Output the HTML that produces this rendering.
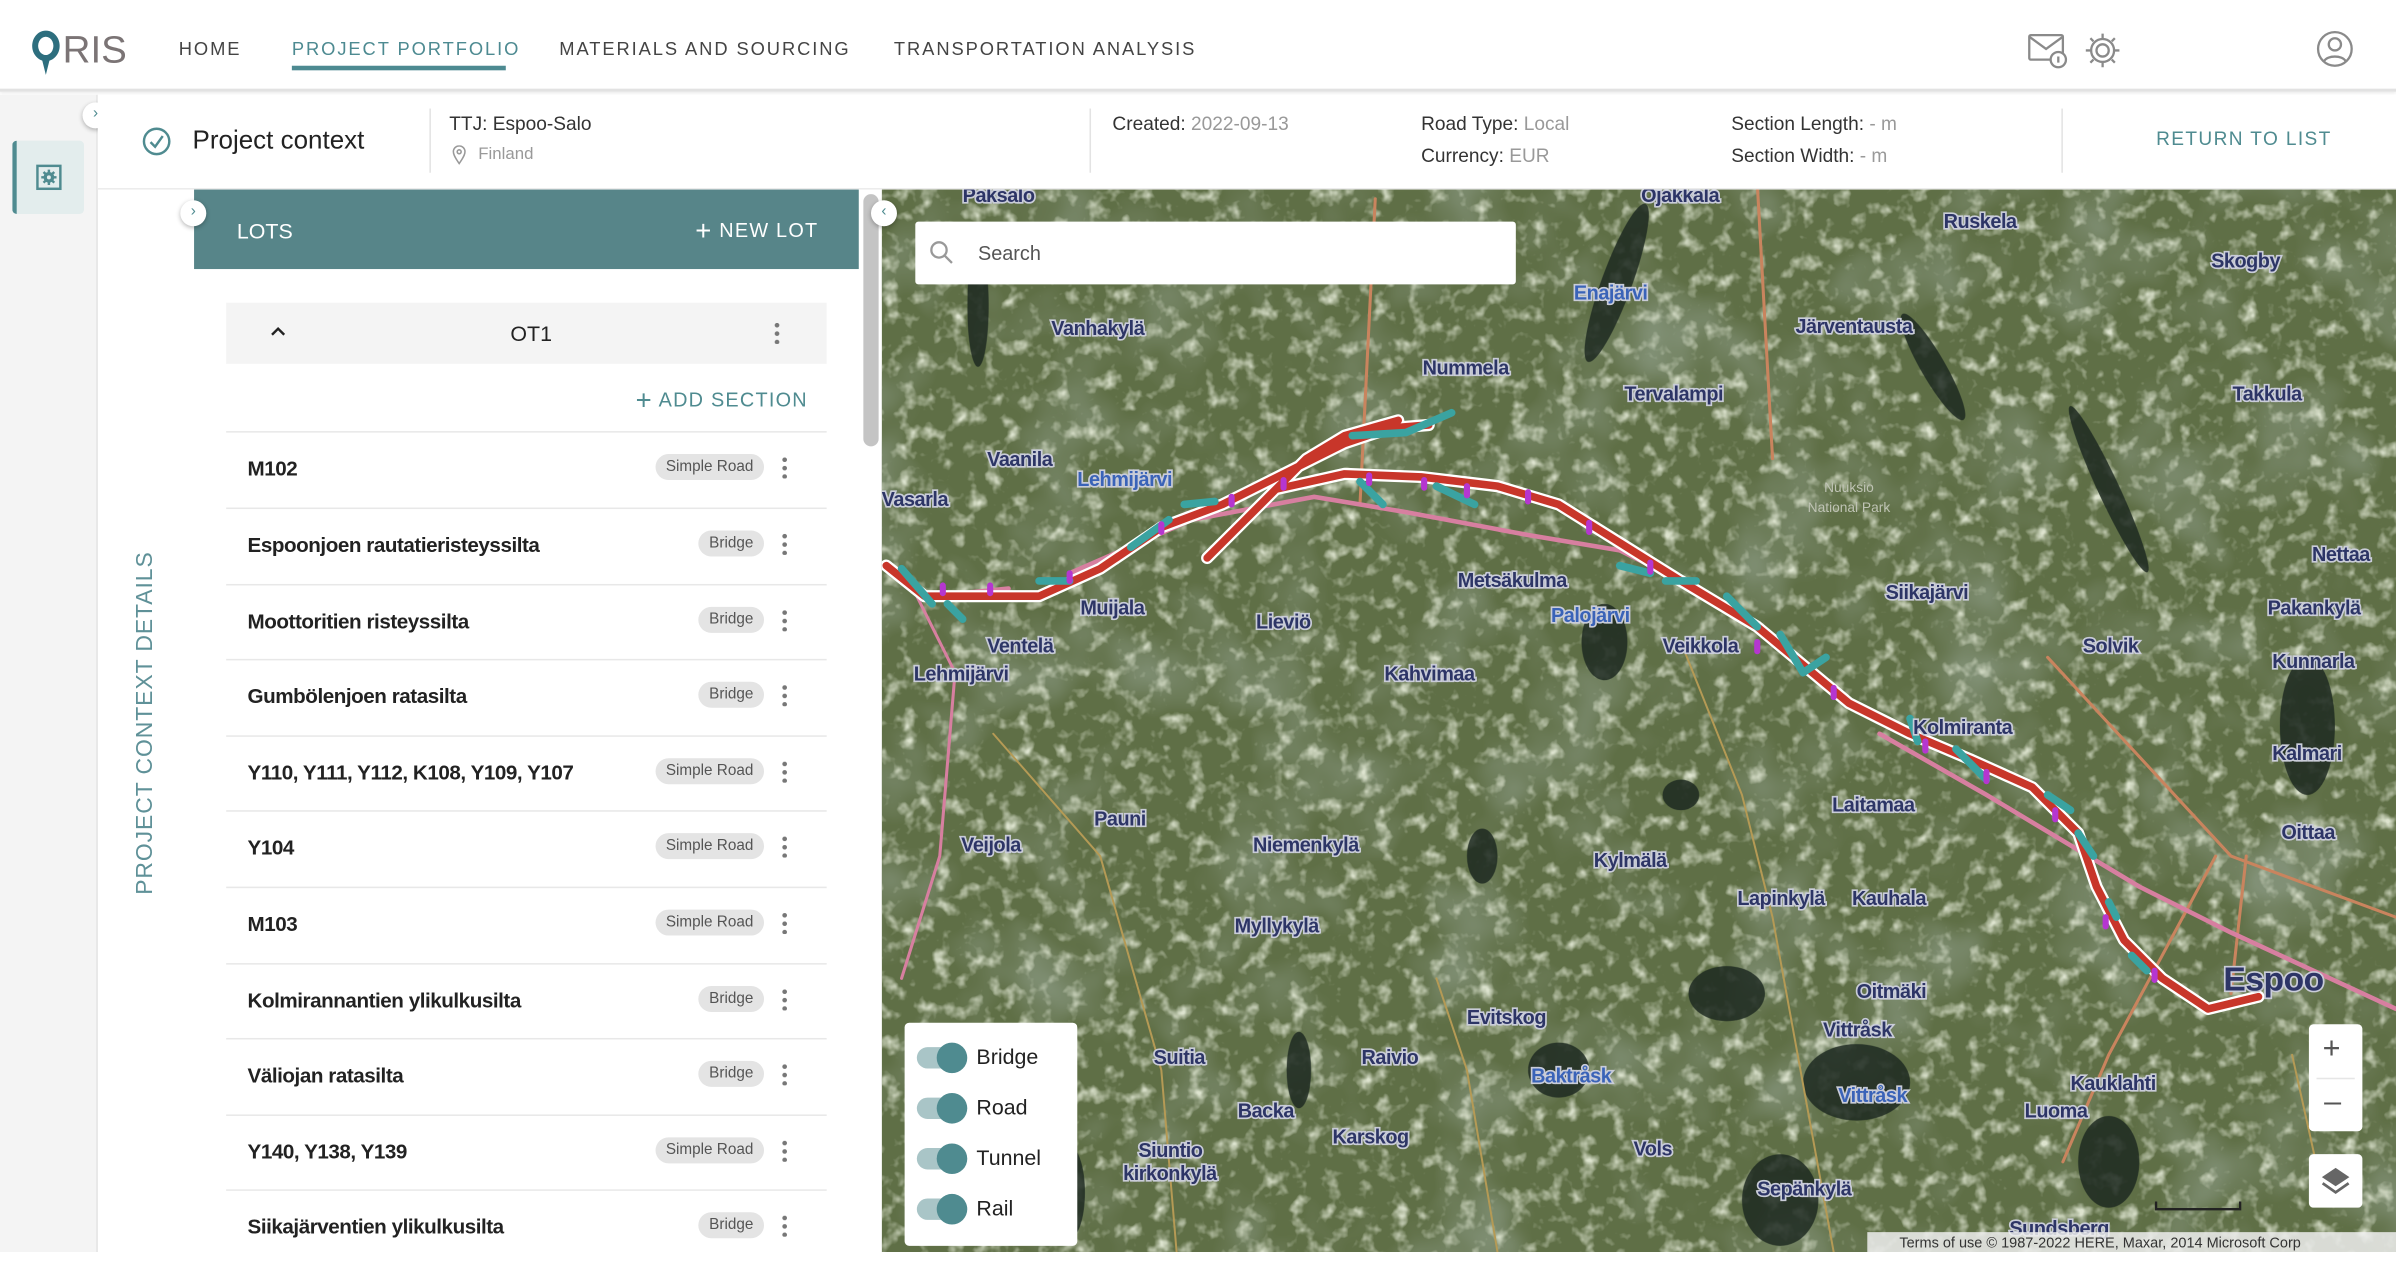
<!DOCTYPE html>
<html><head><meta charset="utf-8">
<style>
*{box-sizing:border-box;margin:0;padding:0}
html,body{width:2396px;height:1252px;overflow:hidden;background:#fff}
#s{position:absolute;left:0;top:0;width:1568px;height:819px;transform:scale(1.52806,1.52869);transform-origin:0 0;font-family:"Liberation Sans",sans-serif;color:#222}
.a{position:absolute}
.nav{font-size:12px;letter-spacing:1.25px;color:#444;top:25px}
.row{position:absolute;left:148px;width:393px;height:50px;border-top:1px solid #e8e8e8}
.row .t{position:absolute;left:14px;top:16px;font-size:13.5px;font-weight:bold;color:#222;letter-spacing:-.3px}
.chip{position:absolute;top:14px;right:41px;height:17px;padding:0 7px;border-radius:9px;background:#e4e4e4;font-size:10px;color:#555;line-height:17px}
.keb{position:absolute;right:26px;top:15px;width:3px;height:15px;background:radial-gradient(circle,#777 1.4px,transparent 1.6px) 0 0/3px 5.5px}
.circ{position:absolute;width:17px;height:17px;border-radius:50%;background:#fff;box-shadow:0 1px 3px rgba(0,0,0,.3);font-size:10px;color:#4f8b90;text-align:center;line-height:16px}
.lab{font-family:"Liberation Sans",sans-serif;font-size:13px;fill:#2d3566;stroke:#c9ccd8;stroke-width:2.2px;paint-order:stroke;font-weight:bold;letter-spacing:-.3px}
.lb{fill:#3a63b8}
.tg{position:absolute;left:8px;width:32px;height:14px;border-radius:7px;background:#a9c5c7}
.tg:after{content:"";position:absolute;right:-1px;top:-3px;width:20px;height:20px;border-radius:50%;background:#4f8b90}
.tl{position:absolute;left:47px;font-size:14px;color:#222}
</style></head><body><div id="s">

<div class="a" style="left:0;top:0;width:1568px;height:60px;background:#fff;border-bottom:2px solid #e2e2e2;box-shadow:0 1px 2px rgba(0,0,0,.08)"></div>
<svg class="a" style="left:20px;top:17px" width="66" height="34" viewBox="0 0 66 34">
<path d="M10 3a9 10 0 1 0 .1 0zm0 4a5 6 0 1 1-.1 0z" fill="#2d6e7e" fill-rule="evenodd"/>
<path d="M7 20l3 12 3-12z" fill="#2d6e7e"/>
<text x="21" y="24" font-family="Liberation Sans" font-size="25" fill="#7b7475" textLength="42" lengthAdjust="spacingAndGlyphs">RIS</text>
</svg>
<div class="a nav" style="left:117px">HOME</div>
<div class="a nav" style="left:191px;color:#4d8a91">PROJECT PORTFOLIO</div>
<div class="a" style="left:191px;top:43px;width:140px;height:3px;background:#4d8a91"></div>
<div class="a nav" style="left:366px">MATERIALS AND SOURCING</div>
<div class="a nav" style="left:585px">TRANSPORTATION ANALYSIS</div>
<svg class="a" style="left:1326px;top:20px" width="64" height="26" viewBox="0 0 64 26" fill="none" stroke="#8a8a8a" stroke-width="1.5">
<rect x="2" y="3" width="22" height="16" rx="1"/><path d="M2 4l11 8 11-8"/><circle cx="21" cy="19" r="5" fill="#fff"/><path d="M21 17v4"/>
<circle cx="50" cy="13" r="4"/><path d="M50 2v3M50 21v3M39 13h3M58 13h3M42 5l2 2M56 19l2 2M42 21l2-2M56 7l2-2"/><circle cx="50" cy="13" r="7.5"/>
</svg>
<svg class="a" style="left:1515px;top:19px" width="26" height="26" viewBox="0 0 26 26" fill="none" stroke="#8a8a8a" stroke-width="1.5"><circle cx="13" cy="13" r="11"/><circle cx="13" cy="10" r="4"/><path d="M6 21c2-4 12-4 14 0"/></svg>

<div class="a" style="left:0;top:62px;width:64px;height:757px;background:#f4f4f4;border-right:1px solid #e4e4e4"></div>
<div class="a" style="left:8px;top:92px;width:47px;height:48px;background:#e3eded;border-left:3px solid #4f8b90;border-radius:3px"></div>
<svg class="a" style="left:23px;top:107px" width="18" height="18" viewBox="0 0 18 18"><rect x="1.5" y="1.5" width="15" height="15" fill="none" stroke="#4f8b90" stroke-width="1.6"/><circle cx="9" cy="9" r="3.5" fill="#4f8b90"/><path d="M9 4v10M4 9h10M5.5 5.5l7 7M12.5 5.5l-7 7" stroke="#4f8b90" stroke-width="1.6"/><circle cx="9" cy="9" r="1.3" fill="#e3eded"/></svg>
<div class="circ" style="left:54px;top:67px">›</div>

<div class="a" style="left:64px;top:62px;width:1504px;height:62px;background:#fff;border-bottom:1px solid #ececec"></div>
<svg class="a" style="left:93px;top:83px" width="19" height="19" viewBox="0 0 19 19" fill="none" stroke="#4f8b90" stroke-width="1.6"><circle cx="9.5" cy="9.5" r="8.3"/><path d="M5.5 10l3 3 5-7"/></svg>
<div class="a" style="left:126px;top:82px;font-size:17px;color:#222">Project context</div>
<div class="a" style="left:281px;top:71px;width:1px;height:42px;background:#e3e3e3"></div>
<div class="a" style="left:294px;top:74px;font-size:12.5px;color:#333">TTJ: Espoo-Salo</div>
<svg class="a" style="left:296px;top:95px" width="9" height="13" viewBox="0 0 9 13" fill="none" stroke="#999" stroke-width="1"><path d="M4.5 12C1 7 .7 5.5.7 4.2a3.8 3.8 0 0 1 7.6 0C8.3 5.5 8 7 4.5 12z"/><circle cx="4.5" cy="4.3" r="1.3"/></svg>
<div class="a" style="left:313px;top:95px;font-size:11px;color:#999">Finland</div>
<div class="a" style="left:713px;top:71px;width:1px;height:42px;background:#e3e3e3"></div>
<div class="a" style="left:728px;top:74px;font-size:12.5px;color:#333">Created: <span style="color:#999">2022-09-13</span></div>
<div class="a" style="left:930px;top:74px;font-size:12.5px;color:#333">Road Type: <span style="color:#999">Local</span></div>
<div class="a" style="left:930px;top:95px;font-size:12.5px;color:#333">Currency: <span style="color:#999">EUR</span></div>
<div class="a" style="left:1133px;top:74px;font-size:12.5px;color:#333">Section Length: <span style="color:#999">- m</span></div>
<div class="a" style="left:1133px;top:95px;font-size:12.5px;color:#333">Section Width: <span style="color:#999">- m</span></div>
<div class="a" style="left:1349px;top:71px;width:1px;height:42px;background:#e3e3e3"></div>
<div class="a" style="left:1411px;top:84px;font-size:12.5px;color:#4f8b90;letter-spacing:.9px">RETURN TO LIST</div>

<div class="a" style="left:95px;top:473px;transform:translate(-50%,-50%) rotate(-90deg);white-space:nowrap;font-size:15px;letter-spacing:.6px;color:#5f9198">PROJECT CONTEXT DETAILS</div>

<div class="a" style="left:127px;top:124px;width:435px;height:52px;background:#578589"></div>
<div class="a" style="left:155px;top:143px;font-size:14px;color:#fff">LOTS</div>
<div class="a" style="left:455px;top:141px;font-size:13px;color:#fff;letter-spacing:.8px"><span style="font-size:18px;vertical-align:-2px">+</span> NEW LOT</div>
<div class="circ" style="left:118px;top:131px">›</div>
<div class="a" style="left:148px;top:198px;width:393px;height:40px;background:#f4f4f4"></div>
<svg class="a" style="left:176px;top:212px" width="12" height="10" viewBox="0 0 12 10"><path d="M2 7l4-4 4 4" fill="none" stroke="#222" stroke-width="1.6"/></svg>
<div class="a" style="left:334px;top:210px;font-size:14px;color:#222">OT1</div>
<div class="keb" style="left:507px;top:210px"></div>
<div class="a" style="left:416px;top:252px;font-size:13px;color:#4f8b90;letter-spacing:.8px"><span style="font-size:18px;vertical-align:-2px">+</span> ADD SECTION</div>

<div class="row" style="top:282px"><div class="t">M102</div><div class="chip">Simple Road</div><div class="keb"></div></div>
<div class="row" style="top:332px"><div class="t">Espoonjoen rautatieristeyssilta</div><div class="chip">Bridge</div><div class="keb"></div></div>
<div class="row" style="top:382px"><div class="t">Moottoritien risteyssilta</div><div class="chip">Bridge</div><div class="keb"></div></div>
<div class="row" style="top:431px"><div class="t">Gumbölenjoen ratasilta</div><div class="chip">Bridge</div><div class="keb"></div></div>
<div class="row" style="top:481px"><div class="t">Y110, Y111, Y112, K108, Y109, Y107</div><div class="chip">Simple Road</div><div class="keb"></div></div>
<div class="row" style="top:530px"><div class="t">Y104</div><div class="chip">Simple Road</div><div class="keb"></div></div>
<div class="row" style="top:580px"><div class="t">M103</div><div class="chip">Simple Road</div><div class="keb"></div></div>
<div class="row" style="top:630px"><div class="t">Kolmirannantien ylikulkusilta</div><div class="chip">Bridge</div><div class="keb"></div></div>
<div class="row" style="top:679px"><div class="t">Väliojan ratasilta</div><div class="chip">Bridge</div><div class="keb"></div></div>
<div class="row" style="top:729px"><div class="t">Y140, Y138, Y139</div><div class="chip">Simple Road</div><div class="keb"></div></div>
<div class="row" style="top:778px"><div class="t">Siikajärventien ylikulkusilta</div><div class="chip">Bridge</div><div class="keb"></div></div>

<div class="a" style="left:565px;top:127px;width:10px;height:165px;border-radius:5px;background:#c4c4c4"></div>

<svg class="a" style="left:577px;top:124px" width="991" height="695" viewBox="577 124 991 695">
<defs>
<filter id="n" x="0" y="0" width="100%" height="100%">
<feTurbulence type="fractalNoise" baseFrequency="0.09" numOctaves="3" seed="7"/>
<feColorMatrix type="matrix" values="0 0 0 0 0.72  0 0 0 0 0.77  0 0 0 0 0.62  0 0 0 2.6 -1.35"/>
</filter>
<filter id="d" x="0" y="0" width="100%" height="100%">
<feTurbulence type="fractalNoise" baseFrequency="0.015" numOctaves="3" seed="3"/>
<feColorMatrix type="matrix" values="0 0 0 0 0.22  0 0 0 0 0.28  0 0 0 0 0.18  0 0 0 2.5 -1.2"/>
</filter>
<clipPath id="c"><rect x="577" y="124" width="991" height="695"/></clipPath>
</defs>
<g clip-path="url(#c)">
<rect x="577" y="124" width="991" height="695" fill="#5f6f46"/>
<rect x="577" y="124" width="991" height="695" filter="url(#d)"/>
<rect x="577" y="124" width="991" height="695" filter="url(#n)"/>
<g fill="#1e2a22" opacity=".85">
<ellipse cx="1510" cy="475" rx="18" ry="45"/><ellipse cx="1215" cy="708" rx="35" ry="25"/><ellipse cx="1020" cy="700" rx="20" ry="18"/>
<ellipse cx="1165" cy="785" rx="25" ry="30"/><ellipse cx="1058" cy="185" rx="10" ry="55" transform="rotate(20 1058 185)"/>
<ellipse cx="1380" cy="760" rx="20" ry="30"/><ellipse cx="700" cy="780" rx="10" ry="30"/><ellipse cx="1130" cy="650" rx="25" ry="18"/>
<ellipse cx="1265" cy="240" rx="8" ry="40" transform="rotate(-30 1265 240)"/><ellipse cx="1380" cy="320" rx="7" ry="60" transform="rotate(-25 1380 320)"/>
<ellipse cx="970" cy="560" rx="10" ry="18"/><ellipse cx="1100" cy="520" rx="12" ry="10"/><ellipse cx="1050" cy="420" rx="15" ry="25"/>
<ellipse cx="640" cy="200" rx="7" ry="40"/><ellipse cx="850" cy="700" rx="8" ry="25"/>
</g>
<g fill="none" stroke-linecap="round">
<path d="M900 130L890 330M1150 120L1160 300M1340 430L1460 560L1568 600M1460 650L1470 560M1350 760L1380 690L1450 560" stroke="#c9845e" stroke-width="2"/>
<path d="M650 480L720 560L760 700L770 819M940 640L960 700L980 819M1100 420L1140 520L1160 600L1200 819M1500 690L1520 780" stroke="#b59a55" stroke-width="1.3"/>
<path d="M578 370L610 390L660 385M700 375L780 340L860 325L920 335L1000 350L1060 360L1100 380M1230 480L1300 520L1400 580L1460 610L1568 660" stroke="#d77fa0" stroke-width="3"/>
<path d="M600 390L625 440L615 560L590 640" stroke="#d77fa0" stroke-width="2"/>
</g>
<g fill="none" stroke-linecap="round" stroke-linejoin="round">
<path d="M580 370L605 390L680 390L720 372L760 345L800 330L840 310L880 290L910 280L935 278M790 365L820 335L855 300L880 285L915 275M835 320L880 310L930 312L980 318L1020 330L1060 355L1100 380L1150 410L1180 435L1210 460L1250 480L1290 497L1330 515L1360 545L1372 580L1390 615L1415 640L1445 660L1478 652" stroke="#fff" stroke-width="8"/>
<path d="M580 370L605 390L680 390L720 372L760 345L800 330L840 310L880 290L910 280L935 278M790 365L820 335L855 300L880 285L915 275M835 320L880 310L930 312L980 318L1020 330L1060 355L1100 380L1150 410L1180 435L1210 460L1250 480L1290 497L1330 515L1360 545L1372 580L1390 615L1415 640L1445 660L1478 652" stroke="#c8362a" stroke-width="5"/>
<path d="M590 372L610 395M620 395L630 405M680 380L700 380M740 358L765 340M775 330L795 328M885 285L920 283L950 270M890 315L905 330M940 318L965 330M1060 370L1080 375M1090 380L1110 380M1130 390L1150 410M1165 415L1180 440L1195 430M1250 470L1255 485M1280 490L1300 510M1340 520L1355 530M1360 545L1370 560M1380 590L1385 600M1395 625L1405 635" stroke="#3aa3a1" stroke-width="5"/>
<path d="M617 383v5M648 383v5M700 375v5M760 343v5M806 325v5M840 314v5M896 311v5M932 314v5M960 318v6M1000 322v6M1040 342v6M1080 368v6M1150 420v6M1200 450v6M1260 485v6M1300 505v6M1345 530v6M1378 600v6M1410 635v6" stroke="#b536d0" stroke-width="4"/>
</g>
<g class="lab">
<text x="630" y="132">Paksalo</text><text x="1074" y="132">Ojakkala</text><text x="1272" y="149">Ruskela</text><text x="1447" y="175">Skogby</text>
<text x="688" y="219">Vanhakylä</text><text x="1030" y="196" class="lb">Enajärvi</text><text x="1175" y="218">Järventausta</text><text x="931" y="245">Nummela</text>
<text x="1063" y="262">Tervalampi</text><text x="1461" y="262">Takkula</text><text x="646" y="305">Vaanila</text><text x="705" y="318" class="lb">Lehmijärvi</text>
<text x="577" y="331">Vasarla</text><text x="954" y="384">Metsäkulma</text><text x="1513" y="367">Nettaa</text><text x="1234" y="392">Siikajärvi</text>
<text x="1015" y="407" class="lb">Palojärvi</text><text x="707" y="402">Muijala</text><text x="822" y="411">Lieviö</text><text x="1484" y="402">Pakankylä</text>
<text x="646" y="427">Ventelä</text><text x="1088" y="427">Veikkola</text><text x="1363" y="427">Solvik</text><text x="906" y="445">Kahvimaa</text>
<text x="598" y="445">Lehmijärvi</text><text x="1487" y="437">Kunnarla</text><text x="1252" y="480">Kolmiranta</text><text x="1487" y="497">Kalmari</text>
<text x="1199" y="531">Laitamaa</text><text x="716" y="540">Pauni</text><text x="629" y="557">Veijola</text><text x="820" y="557">Niemenkylä</text>
<text x="1493" y="549">Oittaa</text><text x="1043" y="567">Kylmälä</text><text x="1137" y="592">Lapinkylä</text><text x="1212" y="592">Kauhala</text>
<text x="808" y="610">Myllykylä</text><text x="1215" y="653">Oitmäki</text><text x="960" y="670">Evitskog</text><text x="1193" y="678">Vittråsk</text>
<text x="755" y="696">Suitia</text><text x="891" y="696">Raivio</text><text x="1002" y="708" class="lb">Baktråsk</text><text x="1203" y="721" class="lb">Vittråsk</text>
<text x="1355" y="713">Kauklahti</text><text x="810" y="731">Backa</text><text x="1325" y="731">Luoma</text><text x="872" y="748">Karskog</text>
<text x="745" y="757">Siuntio</text><text x="735" y="772">kirkonkylä</text><text x="1069" y="756">Vols</text><text x="1150" y="782">Sepänkylä</text><text x="1315" y="808">Sundsberg</text>
<text x="1455" y="648" style="font-size:22px">Espoo</text>
</g>
<text x="1210" y="322" font-size="9" fill="#bfc3b4" text-anchor="middle" font-family="Liberation Sans">Nuuksio</text>
<text x="1210" y="335" font-size="9" fill="#bfc3b4" text-anchor="middle" font-family="Liberation Sans">National Park</text>
<rect x="1222" y="806" width="346" height="13" fill="#eee" opacity=".85"/>
<text x="1243" y="816" font-size="9.5" fill="#333" font-family="Liberation Sans">Terms of use     © 1987-2022 HERE, Maxar, 2014 Microsoft Corp</text>
<path d="M1411 786v5h55v-5" fill="none" stroke="#222" stroke-width="1.5"/>
</g>
</svg>
<div class="circ" style="left:570px;top:131px">‹</div>

<div class="a" style="left:599px;top:145px;width:393px;height:41px;background:#fff;border-radius:2px"></div>
<svg class="a" style="left:608px;top:157px" width="17" height="17" viewBox="0 0 17 17" fill="none" stroke="#999" stroke-width="1.5"><circle cx="6.5" cy="6.5" r="5"/><path d="M10 10l5 5"/></svg>
<div class="a" style="left:640px;top:158px;font-size:13px;color:#555">Search</div>

<div class="a" style="left:592px;top:669px;width:113px;height:146px;background:#fff;border-radius:3px">
<div class="tg" style="top:16px"></div><div class="tl" style="top:14px">Bridge</div>
<div class="tg" style="top:49px"></div><div class="tl" style="top:47px">Road</div>
<div class="tg" style="top:82px"></div><div class="tl" style="top:80px">Tunnel</div>
<div class="tg" style="top:115px"></div><div class="tl" style="top:113px">Rail</div>
</div>

<div class="a" style="left:1511px;top:670px;width:35px;height:70px;background:#fff;border-radius:3px"></div>
<div class="a" style="left:1516px;top:705px;width:25px;height:1px;background:#e6e6e6"></div>
<div class="a" style="left:1520px;top:675px;font-size:20px;color:#555">+</div>
<div class="a" style="left:1521px;top:710px;font-size:20px;color:#555">–</div>
<div class="a" style="left:1511px;top:755px;width:35px;height:35px;background:#fff;border-radius:3px"></div>
<svg class="a" style="left:1518px;top:762px" width="21" height="21" viewBox="0 0 21 21"><path d="M10.5 2l9 6-9 6-9-6z" fill="#666"/><path d="M2 12l8.5 6 8.5-6" fill="none" stroke="#666" stroke-width="1.8"/></svg>
</div></body></html>
